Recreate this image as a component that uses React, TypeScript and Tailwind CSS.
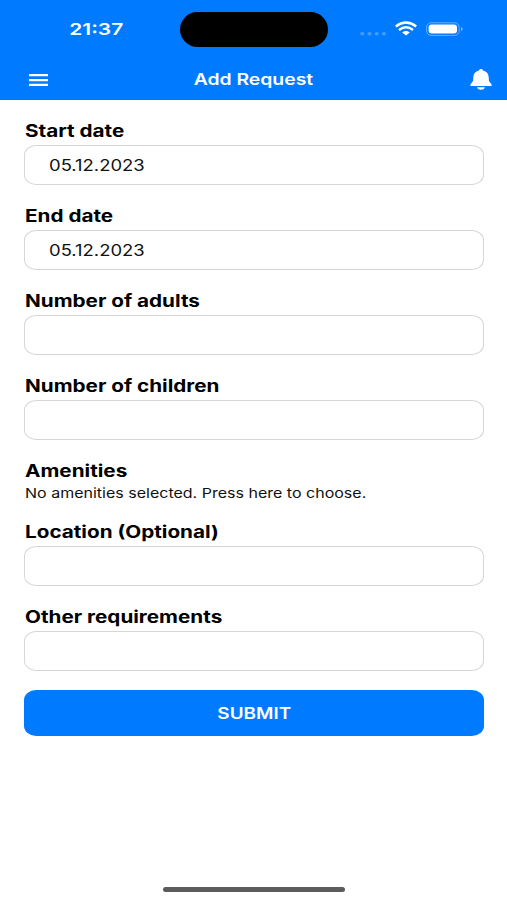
import type { ReactNode } from "react";
import { clsx } from "clsx";

const FIELDS_TOP = [
  { label: "Start date", value: "05.12.2023" },
  { label: "End date", value: "05.12.2023" },
  { label: "Number of adults", value: "" },
  { label: "Number of children", value: "" },
];

const FIELDS_BOTTOM = [
  { label: "Location (Optional)", value: "" },
  { label: "Other requirements", value: "" },
];

const Wide = ({ children, className }: { children: ReactNode; className?: string }) => (
  <span className={clsx("inline-block whitespace-nowrap", className)}>{children}</span>
);

const Label = ({ children }: { children: ReactNode }) => (
  <div className="h-[22px] pl-px text-[17px] leading-[24px] font-bold">
    <Wide className="origin-left scale-x-[1.217]">{children}</Wide>
  </div>
);

const Field = ({ label, value }: { label: string; value: string }) => (
  <div className="flex flex-col gap-1">
    <Label>{label}</Label>
    <div className="flex h-10 items-center rounded-[12px/10px] border border-[#d6d6d6] pt-0.5 pl-6 text-[15.5px] text-[#111]">
      <Wide className="origin-left scale-x-[1.19]">{value}</Wide>
    </div>
  </div>
);

const StatusBar = () => (
  <div className="flex h-[59px] items-center">
    <div className="flex w-[180px] justify-center pl-3 text-[16.5px] font-semibold">
      <Wide className="scale-x-[1.27]">21:37</Wide>
    </div>
    <div className="h-[35px] w-[148px] rounded-full bg-black" />
    <svg className="ml-8 h-5 w-[106px]" viewBox="0 0 106 20" fill="none">
      <g fill="#fff" fillOpacity="0.25">
        <rect x="0.2" y="12" width="4.2" height="3.4" rx="1.7" />
        <rect x="7.4" y="12" width="4.2" height="3.4" rx="1.7" />
        <rect x="14.6" y="12" width="4.2" height="3.4" rx="1.7" />
        <rect x="21.8" y="12" width="4.2" height="3.4" rx="1.7" />
      </g>
      <g stroke="#fff" strokeWidth="2.4">
        <path d="M35.8 6.5Q46 -1.3 56.2 6.5" />
        <path d="M39 10Q46 4.7 53 10" />
      </g>
      <path d="M42.2 12.4Q46 9.6 49.8 12.4L46 15.6Z" fill="#fff" />
      <rect x="66.6" y="2.8" width="32.6" height="12.6" rx="4.5" stroke="#fff" strokeOpacity="0.4" />
      <rect x="68.6" y="4.6" width="28.4" height="9" rx="3" fill="#fff" />
      <path d="M101 7V11.2Q102.8 10.6 102.8 9.1T101 7Z" fill="#fff" fillOpacity="0.45" />
    </svg>
  </div>
);

const NavBar = () => (
  <div className="grid h-[41px] grid-cols-[1fr_auto_1fr] items-center pr-[15px] pl-[29px]">
    <svg className="h-3 w-[19px]" viewBox="0 0 19 12" fill="#fff">
      <path d="M0 0H19V2.3H0ZM0 4.9H19V7.2H0ZM0 9.7H19V12H0Z" />
    </svg>
    <div className="pr-[14px] pb-0.5 text-base font-semibold">
      <Wide className="scale-x-[1.21]">Add Request</Wide>
    </div>
    <svg className="h-[21px] w-[22px] justify-self-end" viewBox="0 0 22 21" fill="#fff">
      <path d="M11 0C12.2 0 12.9 .7 13.1 1.5C16.5 2.3 18.6 4.8 18.7 8.2C18.8 11.3 19 12.4 20.1 13.6L21.5 15.2C22 16 21.6 17 20.6 17H1.4C.4 17 0 16 .5 15.2L1.9 13.6C3 12.4 3.2 11.3 3.3 8.2C3.4 4.8 5.5 2.3 8.9 1.5C9.1 .7 9.8 0 11 0Z" />
      <path d="M7 18.2H15C14.5 19.9 12.9 20.7 11 20.7S7.5 19.9 7 18.2Z" />
    </svg>
  </div>
);

export default function App() {
  return (
    <div className="flex h-[900px] w-[507px] flex-col overflow-hidden bg-white font-['Inter',sans-serif] text-black">
      <header className="h-[100px] shrink-0 bg-[#007aff] text-white">
        <StatusBar />
        <NavBar />
      </header>

      <main className="flex flex-1 flex-col pt-[19px] pr-[23px] pl-6">
        <div className="flex flex-col gap-[19px]">
          {FIELDS_TOP.map((f) => (
            <Field key={f.label} {...f} />
          ))}
          <div className="h-[42px]">
            <Label>Amenities</Label>
            <div className="pl-px text-[13.5px] leading-[24px] text-[#111]">
              <Wide className="origin-left scale-x-[1.186]">No amenities selected. Press here to choose.</Wide>
            </div>
          </div>
          {FIELDS_BOTTOM.map((f) => (
            <Field key={f.label} {...f} />
          ))}
        </div>

        <button className="mt-[19px] h-[46px] rounded-[12px/10px] bg-[#007aff] pt-0.5 text-[15.5px] font-semibold text-white">
          <Wide className="scale-x-[1.22]">SUBMIT</Wide>
        </button>
      </main>

      <div className="mb-2 ml-[163px] h-[5px] w-[182px] rounded-full bg-[#5c5c5c]" />
    </div>
  );
}
